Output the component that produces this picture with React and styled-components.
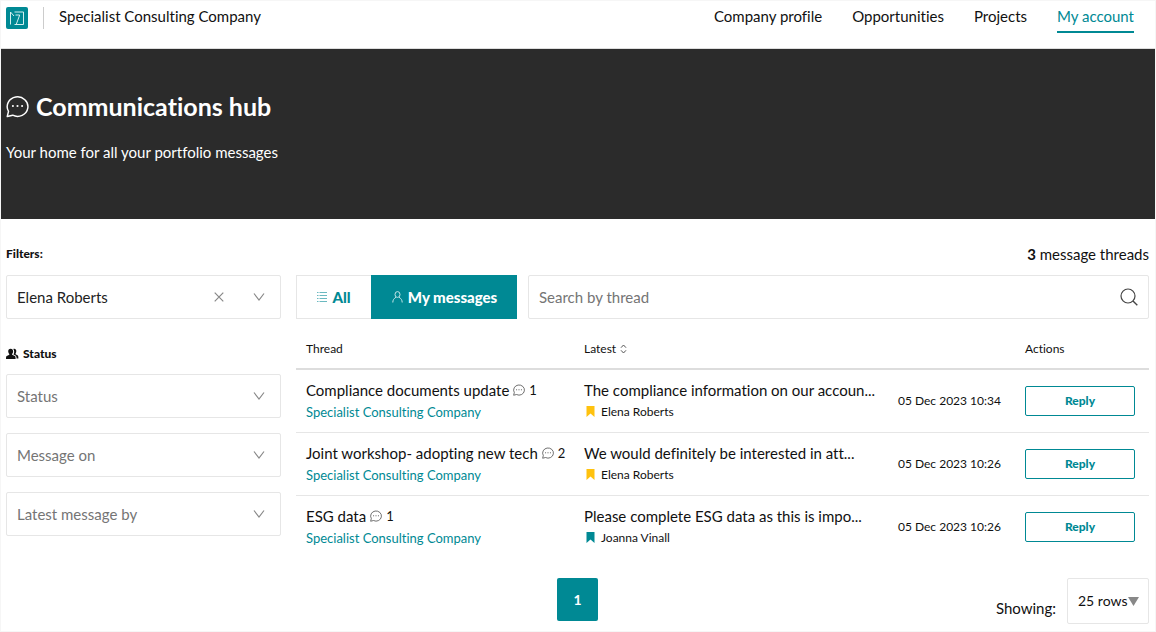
import React, { useState } from 'react';
import styled, { createGlobalStyle, css } from 'styled-components';

const GlobalStyle = createGlobalStyle`
  *, *::before, *::after {
    box-sizing: border-box;
  }

  :root {
    --teal: #008994;
    --dark: #2b2b2b;
    --text: #111;
    --muted: #757575;
    --line: #e6e6e6;
  }

  body {
    margin: 0;
    background: #fff;
    color: var(--text);
    font-family: Lato, 'Open Sans', sans-serif;
    font-size: 15px;
    line-height: 20px;
    font-variant-ligatures: none;
  }

  button, input, select {
    font: inherit;
    color: inherit;
    margin: 0;
  }

  svg {
    display: block;
    flex: none;
  }
`;

const Page = styled.div`
  min-height: 100vh;
  border: 1px solid #f6f6f6;
`;

const Header = styled.header`
  display: flex;
  justify-content: space-between;
  height: 48px;
  padding: 6px 21px 0 5px;
  border-bottom: 1px solid #ddd;
  line-height: 18px;
`;

const Brand = styled.div`
  display: flex;
  align-items: flex-start;
`;

const BrandName = styled.span`
  height: 22px;
  margin-left: 15px;
  padding-left: 15px;
  border-left: 1px solid #ccc;
`;

const Nav = styled.nav`
  display: flex;
  align-items: flex-start;
  gap: 30px;
`;

const NavLink = styled.a`
  padding-bottom: 6px;
  border-bottom: 2px solid transparent;
  color: var(--text);
  text-decoration: none;
  ${({ $active }) =>
    $active &&
    css`
      color: var(--teal);
      border-color: var(--teal);
    `}
`;

const Hero = styled.section`
  height: 170px;
  padding: 41px 5px 0;
  background: var(--dark);
  color: #fff;
`;

const HeroTitle = styled.h1`
  display: flex;
  align-items: center;
  gap: 7px;
  margin: 0;
  font-size: 25px;
  font-weight: 700;
  line-height: 32px;
`;

const HeroText = styled.p`
  margin: 20px 0 0;
`;

const Content = styled.main`
  padding: 25px 6px 7px 5px;
`;

const Columns = styled.div`
  display: grid;
  grid-template-columns: 275px minmax(0, 1fr);
  column-gap: 15px;
`;

const TopLine = styled.div`
  display: flex;
  justify-content: ${({ $end }) => ($end ? 'flex-end' : 'flex-start')};
  height: 31px;
  white-space: pre;
`;

const Label = styled.h2`
  display: flex;
  align-items: center;
  gap: 4px;
  height: 20px;
  margin: 0;
  font-size: 12px;
  font-weight: 900;
`;

const StatusGroup = styled.section`
  display: flex;
  flex-direction: column;
  gap: 15px;
  margin-top: 25px;

  ${Label} {
    margin-bottom: -5px;
  }
`;

const SelectBox = styled.div`
  position: relative;
`;

const Select = styled.select`
  appearance: none;
  width: 100%;
  height: 44px;
  padding: 0 70px 0 10px;
  border: 1px solid var(--line);
  border-radius: 2px;
  background: #fff;
  color: ${({ $filled }) => ($filled ? '#222' : 'var(--muted)')};
`;

const SelectIcons = styled.div`
  position: absolute;
  top: 0;
  right: 16px;
  display: flex;
  align-items: center;
  gap: 29px;
  height: 100%;
  color: #888;
  pointer-events: none;
`;

const ClearButton = styled.button`
  padding: 0;
  border: 0;
  background: none;
  pointer-events: auto;
  cursor: pointer;
`;

const Toolbar = styled.div`
  display: flex;
  gap: 11px;
`;

const Tabs = styled.div`
  display: flex;
  height: 44px;
`;

const Tab = styled.button`
  display: flex;
  align-items: center;
  justify-content: center;
  gap: 5px;
  width: ${({ $wide }) => ($wide ? '146px' : '75px')};
  padding: 0;
  border: 1px solid var(--line);
  border-right: 0;
  background: #fff;
  color: var(--teal);
  font-size: 15px;
  font-weight: 900;
  cursor: pointer;
  ${({ $active }) =>
    $active &&
    css`
      border-color: var(--teal);
      background: var(--teal);
      color: #fff;
    `}
`;

const SearchBox = styled.form`
  display: flex;
  flex: 1;
  align-items: center;
  padding: 0 10px;
  border: 1px solid var(--line);
  border-radius: 2px;
`;

const SearchInput = styled.input`
  flex: 1;
  min-width: 0;
  height: 40px;
  padding: 0;
  border: 0;
  outline: 0;

  &::placeholder {
    color: var(--muted);
  }
`;

const SearchButton = styled.button`
  padding: 0;
  border: 0;
  background: none;
  color: #444;
  cursor: pointer;
`;

const Table = styled.table`
  width: 100%;
  border-collapse: collapse;
  table-layout: fixed;
`;

const Col = styled.col`
  width: ${({ $width }) => $width};
`;

const Th = styled.th`
  height: 50px;
  padding: 10px 10px 0;
  border-bottom: 2px solid #ddd;
  font-size: 12px;
  font-weight: 400;
  text-align: left;
`;

const HeadLabel = styled.span`
  display: flex;
  align-items: center;
  gap: 4px;
`;

const Row = styled.tr`
  & + & {
    border-top: 1px solid var(--line);
  }
`;

const Td = styled.td`
  height: 63px;
  padding: 0 10px;
  font-size: ${({ $small }) => ($small ? '12px' : '15px')};
  white-space: nowrap;
`;

const Line = styled.div`
  display: flex;
  align-items: center;
  gap: 4px;
  height: 22px;
`;

const SubLine = styled(Line)`
  gap: 6px;
  padding-left: ${({ $indent }) => ($indent ? '2px' : '0')};
  font-size: 12px;
`;

const Count = styled.span`
  font-size: 13px;
`;

const CompanyLink = styled.a`
  color: var(--teal);
  font-size: 13px;
  text-decoration: none;
`;

const ReplyButton = styled.button`
  display: block;
  width: 110px;
  height: 30px;
  padding: 0;
  border: 1px solid var(--teal);
  border-radius: 2px;
  background: #fff;
  color: var(--teal);
  font-size: 12px;
  font-weight: 900;
  cursor: pointer;
`;

const Footer = styled.footer`
  display: grid;
  grid-template-columns: 1fr auto 1fr;
  align-items: start;
  margin-top: 20px;
`;

const PageButton = styled.button`
  grid-column: 2;
  width: 41px;
  height: 43px;
  padding: 0;
  border: 0;
  border-radius: 2px;
  background: var(--teal);
  color: #fff;
  font-size: 14px;
  font-weight: 700;
`;

const PageSize = styled.div`
  display: flex;
  align-items: center;
  justify-content: flex-end;
  gap: 11px;

  label {
    padding-top: 14px;
  }
`;

const RowsBox = styled.div`
  position: relative;
`;

const RowsSelect = styled.select`
  appearance: none;
  width: 82px;
  height: 46px;
  padding: 0 10px;
  border: 1px solid var(--line);
  border-radius: 2px;
  background: #fff;
  font-size: 14px;
`;

const RowsArrow = styled.svg`
  position: absolute;
  top: 19px;
  right: 10px;
  pointer-events: none;
`;

const Logo = () => (
  <svg width="22" height="22" viewBox="0 0 22 22" fill="none">
    <rect width="22" height="22" rx="2" fill="#008994" />
    <path
      d="M4.500 17.500V5l3.500 4M8.500 5h9v12.500H8.500M9.500 8h4.200L10.400 17"
      stroke="#d4eeef"
      strokeWidth="1"
    />
  </svg>
);

const ChatIcon = ({ size, color = '#444' }) => (
  <svg width={size} height={size} viewBox="0 0 22 22" fill="none">
    <path
      d="M1.2 20.6l1.2-5A9.9 9.3 0 1 1 6.400 19.300Z"
      stroke={color}
      strokeWidth="1.400"
      strokeLinejoin="round"
    />
    <g fill={color}>
      <circle cx="6.600" cy="10.500" r="1" />
      <circle cx="11" cy="10.500" r="1" />
      <circle cx="15.400" cy="10.500" r="1" />
    </g>
  </svg>
);

const ChevronIcon = () => (
  <svg width="12" height="12" viewBox="0 0 12 12" fill="none" stroke="currentColor">
    <path d="M1 2.500l5 6.500 5-6.500" strokeWidth="1.200" />
  </svg>
);

const CrossIcon = () => (
  <svg width="10" height="10" viewBox="0 0 10 10" fill="none" stroke="#888">
    <path d="M.7.7l8.600 8.600M9.300.7L.7 9.300" strokeWidth="1.200" />
  </svg>
);

const PeopleIcon = () => (
  <svg width="13" height="12" viewBox="0 0 13 12" fill="#111">
    <path d="M4.600.8c1.700 0 2.600 1.200 2.500 2.800 0 1.100-.5 1.900-1 2.500v.7l2.700 1.300c.6.300.8.900.8 2.900H0c0-2 .2-2.600.8-2.900l2.500-1.300v-.7c-.6-.6-1-1.400-1.100-2.500C2.100 2 3 .8 4.600.8z" />
    <path d="M7.300.9C9 .3 10.300 1.300 10.300 3c0 1-.2 1.800-.7 2.500v.7l1.800 1c.8.400 1 1 1 3.200h-1.800c-.1-1.800-.4-2.500-1.200-2.900L7.500 6.600c.9-1.700 1-4-.2-5.700z" />
  </svg>
);

const ListIcon = () => (
  <svg width="10" height="10" viewBox="0 0 10 10" stroke="#6bb9c0">
    <path d="M0 .5h1.500M2.500.5H10M0 3.500h1.500M2.500 3.500H10M0 6.500h1.500M2.500 6.500H10M0 9.500h1.500M2.500 9.500H10" />
  </svg>
);

const PersonIcon = () => (
  <svg width="11" height="12" viewBox="0 0 11 12" fill="none" stroke="#c5e6e8">
    <ellipse cx="5.500" cy="3.500" rx="2.500" ry="2.900" />
    <path d="M.8 11.500c.1-2.600.9-3.700 3.200-5.300M10.200 11.500c-.1-2.600-.9-3.700-3.200-5.300" />
  </svg>
);

const SearchIcon = () => (
  <svg width="18" height="18" viewBox="0 0 18 18" fill="none" stroke="currentColor">
    <circle cx="8" cy="8" r="7" strokeWidth="1.200" />
    <path d="M13 13l4.300 4.300" strokeWidth="1.400" />
  </svg>
);

const SortIcon = () => (
  <svg width="7" height="10" viewBox="0 0 7 10" fill="none" stroke="#555">
    <path d="M1 3.700L3.500 1 6 3.700M1 6.300L3.500 9 6 6.300" />
  </svg>
);

const BookmarkIcon = ({ color }) => (
  <svg width="9" height="11" viewBox="0 0 9 11" fill={color}>
    <path d="M.5 0h8v11l-4-3.500-4 3.500z" />
  </svg>
);

const navItems = ['Company profile', 'Opportunities', 'Projects', 'My account'];

const threads = [
  {
    title: 'Compliance documents update',
    count: 1,
    latest: 'The compliance information on our accoun...',
    author: 'Elena Roberts',
    color: '#ffc20e',
    date: '05 Dec 2023 10:34',
  },
  {
    title: 'Joint workshop- adopting new tech',
    count: 2,
    latest: 'We would definitely be interested in att...',
    author: 'Elena Roberts',
    color: '#ffc20e',
    date: '05 Dec 2023 10:26',
  },
  {
    title: 'ESG data',
    count: 1,
    latest: 'Please complete ESG data as this is impo...',
    author: 'Joanna Vinall',
    color: '#008994',
    date: '05 Dec 2023 10:26',
  },
];

const FilterSelect = ({ label, value, onClear }) => (
  <SelectBox>
    <Select aria-label={label} $filled={Boolean(value)}>
      <option>{value || label}</option>
    </Select>
    <SelectIcons>
      {value && (
        <ClearButton type="button" aria-label="Clear" onClick={onClear}>
          <CrossIcon />
        </ClearButton>
      )}
      <ChevronIcon />
    </SelectIcons>
  </SelectBox>
);

const App = () => {
  const [person, setPerson] = useState('Elena Roberts');
  const [tab, setTab] = useState('mine');

  return (
    <>
      <GlobalStyle />
      <Page>
        <Header>
          <Brand>
            <Logo />
            <BrandName>Specialist Consulting Company</BrandName>
          </Brand>
          <Nav>
            {navItems.map((item) => (
              <NavLink key={item} href="#" $active={item === 'My account'}>
                {item}
              </NavLink>
            ))}
          </Nav>
        </Header>

        <Hero>
          <HeroTitle>
            <ChatIcon size={23} color="#fff" />
            Communications hub
          </HeroTitle>
          <HeroText>Your home for all your portfolio messages</HeroText>
        </Hero>

        <Content>
          <Columns>
            <aside>
              <TopLine>
                <Label>Filters:</Label>
              </TopLine>
              <FilterSelect label="Person" value={person} onClear={() => setPerson('')} />
              <StatusGroup>
                <Label>
                  <PeopleIcon />
                  Status
                </Label>
                <FilterSelect label="Status" />
                <FilterSelect label="Message on" />
                <FilterSelect label="Latest message by" />
              </StatusGroup>
            </aside>

            <section>
              <TopLine $end>
                <b>3</b> message threads
              </TopLine>
              <Toolbar>
                <Tabs>
                  <Tab type="button" $active={tab === 'all'} onClick={() => setTab('all')}>
                    <ListIcon />
                    All
                  </Tab>
                  <Tab type="button" $wide $active={tab === 'mine'} onClick={() => setTab('mine')}>
                    <PersonIcon />
                    My messages
                  </Tab>
                </Tabs>
                <SearchBox onSubmit={(e) => e.preventDefault()}>
                  <SearchInput aria-label="Search by thread" placeholder="Search by thread" />
                  <SearchButton aria-label="Search">
                    <SearchIcon />
                  </SearchButton>
                </SearchBox>
              </Toolbar>

              <Table>
                <colgroup>
                  <Col />
                  <Col $width="314px" />
                  <Col $width="127px" />
                  <Col $width="134px" />
                </colgroup>
                <thead>
                  <tr>
                    <Th>Thread</Th>
                    <Th>
                      <HeadLabel>
                        Latest
                        <SortIcon />
                      </HeadLabel>
                    </Th>
                    <Th aria-label="Date" />
                    <Th>Actions</Th>
                  </tr>
                </thead>
                <tbody>
                  {threads.map((thread) => (
                    <Row key={thread.title}>
                      <Td>
                        <Line>
                          {thread.title}
                          <ChatIcon size={12} />
                          <Count>{thread.count}</Count>
                        </Line>
                        <SubLine>
                          <CompanyLink href="#">Specialist Consulting Company</CompanyLink>
                        </SubLine>
                      </Td>
                      <Td>
                        <Line>{thread.latest}</Line>
                        <SubLine $indent>
                          <BookmarkIcon color={thread.color} />
                          {thread.author}
                        </SubLine>
                      </Td>
                      <Td $small>{thread.date}</Td>
                      <Td>
                        <ReplyButton type="button">Reply</ReplyButton>
                      </Td>
                    </Row>
                  ))}
                </tbody>
              </Table>
            </section>
          </Columns>

          <Footer>
            <PageButton type="button">1</PageButton>
            <PageSize>
              <label htmlFor="rows">Showing:</label>
              <RowsBox>
                <RowsSelect id="rows">
                  <option>25 rows</option>
                </RowsSelect>
                <RowsArrow width="11" height="9" viewBox="0 0 11 9">
                  <path d="M0 0h11L5.500 9z" fill="#888" />
                </RowsArrow>
              </RowsBox>
            </PageSize>
          </Footer>
        </Content>
      </Page>
    </>
  );
};

export default App;
